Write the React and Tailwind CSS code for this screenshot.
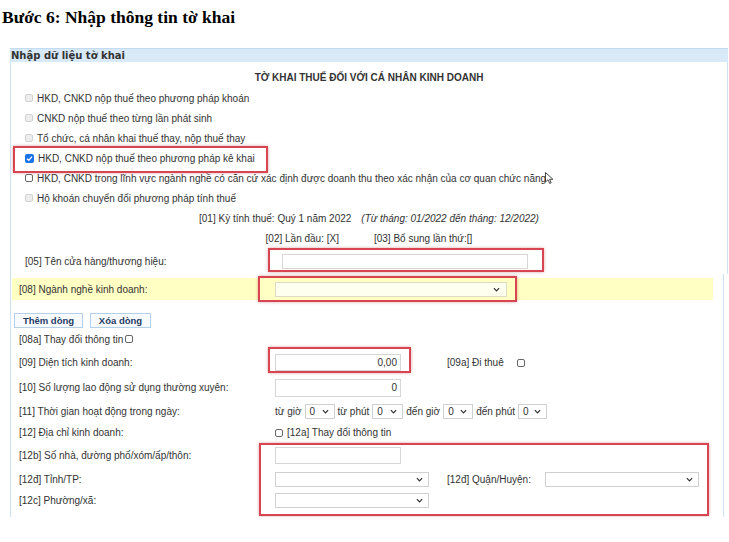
import React from 'react';

const Box = ({ type = 'off' }) => {
  if (type === 'on') {
    return (
      <span className="inline-flex w-[9px] h-[9px] rounded-[2px] bg-[#1a73e8] items-center justify-center shrink-0">
        <svg width="7" height="7" viewBox="0 0 8 8">
          <path d="M1.2 4.2 L3.2 6.1 L6.8 1.9" fill="none" stroke="#fff" strokeWidth="1.6" />
        </svg>
      </span>
    );
  }
  if (type === 'dis') {
    return <span className="inline-block w-[8px] h-[8px] rounded-[2px] border border-[#d2d2d2] bg-[#ededed] shrink-0" />;
  }
  return <span className="inline-block w-[8px] h-[8px] rounded-[2px] border border-[#666] bg-white shrink-0" />;
};

const Chevron = () => (
  <svg width="7" height="5" viewBox="0 0 8 5">
    <path d="M1 1 L4 4 L7 1" fill="none" stroke="#333" strokeWidth="1.4" />
  </svg>
);

const Select = ({ w, value = '', className = '' }) => (
  <div className={`flex items-center justify-between h-[15px] border border-[#d0d0d0] bg-white pl-[4px] pr-[5px] ${w} ${className}`}>
    <span>{value}</span>
    <Chevron />
  </div>
);

const Mark = ({ className }) => (
  <span className={`absolute border-2 border-[#d64550] shadow-[0_0_3px_rgba(150,0,0,0.35)] pointer-events-none ${className}`} />
);

const options = [
  { label: 'HKD, CNKD nộp thuế theo phương pháp khoán', type: 'dis' },
  { label: 'CNKD nộp thuế theo từng lần phát sinh', type: 'dis' },
  { label: 'Tổ chức, cá nhân khai thuế thay, nộp thuế thay', type: 'dis' },
  { label: 'HKD, CNKD nộp thuế theo phương pháp kê khai', type: 'on', marked: true },
  { label: 'HKD, CNKD trong lĩnh vực ngành nghề có căn cứ xác định được doanh thu theo xác nhận của cơ quan chức năng', type: 'off', cursor: true },
  { label: 'Hộ khoán chuyển đổi phương pháp tính thuế', type: 'dis' },
];

const Label = ({ children }) => <div className="w-[264px] pl-[8px] shrink-0">{children}</div>;

export default function App() {
  return (
    <div className="w-[729px] h-[542px] bg-white overflow-hidden text-[10px] text-[#333] font-['Liberation_Sans',Arial,sans-serif]">
      <h1 className="pt-[7px] pl-[2px] leading-[20px] text-[17.5px] font-bold text-black font-['Liberation_Serif','Times_New_Roman',serif]">
        Bước 6: Nhập thông tin tờ khai
      </h1>

      <div className="mt-[21px] ml-[10px] w-[718px] h-[469px] overflow-hidden">
        <div className="h-[14px] bg-[#d8e9f8] border-t border-[#c3dbf0] pl-[1px] leading-[13px] font-bold text-[10px] font-['DejaVu_Sans',Verdana,sans-serif] text-[#333]">
          Nhập dữ liệu tờ khai
        </div>

        {/* upper part */}
        <div className="border-x border-[#cfe2f3]">
          <div className="pt-[9px] mb-[3px] leading-[14px] text-center font-bold">
            TỜ KHAI THUẾ ĐỐI VỚI CÁ NHÂN KINH DOANH
          </div>

          {options.map((o) => (
            <div key={o.label} className="relative h-[20px] flex items-center pl-[14px] gap-[4px] whitespace-nowrap">
              <Box type={o.type} />
              <span>{o.label}</span>
              {o.marked && <Mark className="left-[2px] top-[-2px] w-[255px] h-[27px]" />}
              {o.cursor && (
                <svg className="absolute left-[534px] top-[4px]" width="9" height="13" viewBox="0 0 9 13">
                  <path d="M0.5 0.5 L0.5 10 L3 7.7 L4.7 11.5 L6.2 10.8 L4.6 7.3 L7.9 7.3 Z" fill="#fff" stroke="#333" strokeWidth="0.9" />
                </svg>
              )}
            </div>
          ))}

          <div className="h-[20px] flex items-center justify-center">
            <span>[01] Kỳ tính thuế: Quý 1 năm 2022</span>
            <span className="ml-[10px] italic">(Từ tháng: 01/2022 đến tháng: 12/2022)</span>
          </div>
          <div className="h-[20px] flex items-center justify-center">
            <span>[02] Lần đầu: [X]</span>
            <span className="ml-[35px]">[03] Bổ sung lần thứ:[]</span>
          </div>

          <div className="relative h-[26px] flex items-center pl-[14px]">
            <div className="w-[257px] shrink-0">[05] Tên cửa hàng/thương hiệu:</div>
            <div className="w-[246px] h-[15px] border border-[#d6d6d6] bg-white" />
            <Mark className="left-[257px] top-0 w-[276px] h-[24px]" />
          </div>
        </div>

        {/* lower part */}
        <div className="border-x border-[#cfe2f3] mr-[4px] pt-[4px]">
          <div className="relative ml-[1px] mr-[10px] h-[22px] bg-[#ffffc4] flex items-center">
            <div className="w-[263px] pl-[7px] shrink-0">[08] Ngành nghề kinh doanh:</div>
            <div className="w-[232px] h-[15px] border border-[#dcdcc4] bg-[#fffff0] flex items-center justify-end pr-[6px]">
              <Chevron />
            </div>
            <Mark className="left-[246px] top-[-2px] w-[259px] h-[26px]" />
          </div>

          <div className="mt-[13px] ml-[3px] h-[15px] flex gap-[7px]">
            <button className="w-[69px] h-[15px] border border-[#b5d0ea] bg-[#f7fbff] font-bold text-[9.5px] text-[#1f3a63] leading-[13px]">
              Thêm dòng
            </button>
            <button className="w-[61px] h-[15px] border border-[#b5d0ea] bg-[#f7fbff] font-bold text-[9.5px] text-[#1f3a63] leading-[13px]">
              Xóa dòng
            </button>
          </div>

          <div className="h-[22px] flex items-center pl-[8px] gap-[2px]">
            <span>[08a] Thay đổi thông tin</span>
            <Box />
          </div>

          <div className="relative h-[25px] flex items-center">
            <Label>[09] Diện tích kinh doanh:</Label>
            <div className="w-[126px] h-[17px] border border-[#d6d6d6] bg-white text-right pr-[3px] leading-[15px]">0,00</div>
            <span className="ml-[46px]">[09a] Đi thuê</span>
            <span className="ml-[13px] flex"><Box /></span>
            <Mark className="left-[257px] top-[-3px] w-[143px] h-[26px]" />
          </div>

          <div className="h-[25px] flex items-center">
            <Label>[10] Số lượng lao động sử dụng thường xuyên:</Label>
            <div className="w-[126px] h-[18px] border border-[#d6d6d6] bg-white text-right pr-[3px] leading-[16px]">0</div>
          </div>

          <div className="h-[22px] flex items-center">
            <Label>[11] Thời gian hoạt động trong ngày:</Label>
            <div className="flex items-center gap-[3px] whitespace-nowrap">
              <span>từ giờ</span>
              <Select w="w-[30px]" value="0" />
              <span>từ phút</span>
              <Select w="w-[31px]" value="0" />
              <span>đến giờ</span>
              <Select w="w-[30px]" value="0" />
              <span>đến phút</span>
              <Select w="w-[29px]" value="0" />
            </div>
          </div>

          <div className="h-[21px] flex items-center">
            <Label>[12] Địa chỉ kinh doanh:</Label>
            <Box />
            <span className="ml-[4px]">[12a] Thay đổi thông tin</span>
          </div>

          <div className="relative">
            <div className="h-[25px] flex items-center">
              <Label>[12b] Số nhà, đường phố/xóm/ấp/thôn:</Label>
              <div className="w-[126px] h-[17px] border border-[#d6d6d6] bg-white" />
            </div>
            <div className="h-[22px] flex items-center">
              <Label>[12đ] Tỉnh/TP:</Label>
              <Select w="w-[154px]" />
              <span className="ml-[18px] w-[98px] shrink-0">[12đ] Quận/Huyện:</span>
              <Select w="w-[154px]" />
            </div>
            <div className="h-[21px] flex items-center">
              <Label>[12c] Phường/xã:</Label>
              <Select w="w-[154px]" />
            </div>
            <Mark className="left-[248px] top-0 w-[450px] h-[73px]" />
          </div>

          <div className="h-[20px] pl-[165px] pt-[5px]">
            <Box />
          </div>
        </div>
      </div>
    </div>
  );
}
